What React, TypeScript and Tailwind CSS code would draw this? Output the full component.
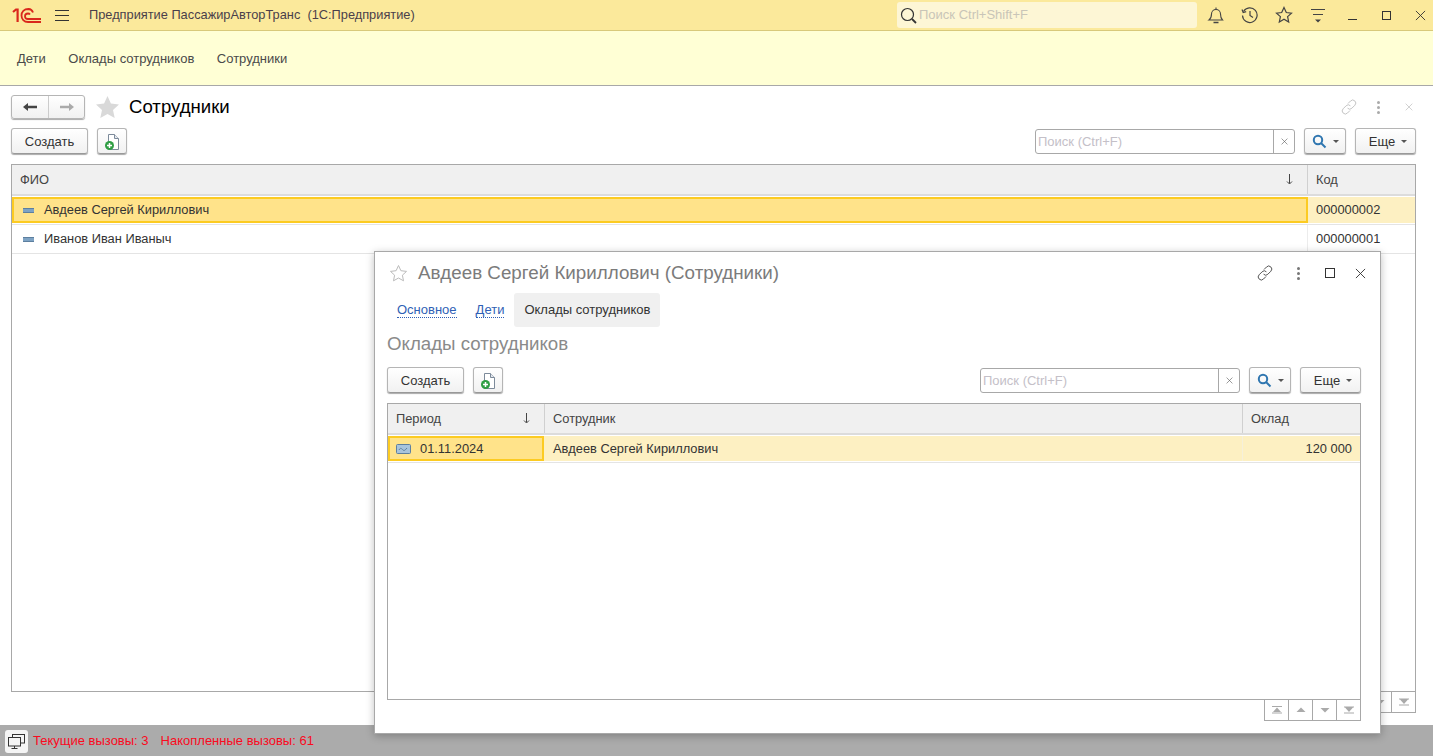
const font = { fontFamily: '"Liberation Sans", Arial, sans-serif' };

function AddIcon() {
  return (
    <svg width="16" height="18" viewBox="0 0 16 18">
      <path d="M4.5 1.5h6l4 4v11h-10z" fill="#fff" stroke="#7c8a9a" />
      <path d="M10.5 1.5v4h4" fill="#e4e8ee" stroke="#7c8a9a" />
      <circle cx="5.5" cy="12.5" r="4.5" fill="#2f9e44" />
      <path d="M3 12.5h5M5.5 10v5" stroke="#fff" strokeWidth="1.5" />
    </svg>
  );
}

function LinkIcon({ color, size = 16 }: { color: string; size?: number }) {
  return (
    <svg width={size} height={size} viewBox="0 0 16 16" fill="none" stroke={color} strokeWidth="1">
      <path d="M7 4.5l2.5-2.5a3 3 0 0 1 4.4 4.2l-3 3a3 3 0 0 1-4.3 0" />
      <path d="M9 11.5L6.5 14a3 3 0 0 1-4.4-4.2l3-3a3 3 0 0 1 4.3 0" />
    </svg>
  );
}

function Dots({ color }: { color: string }) {
  return (
    <div className="flex flex-col gap-[2px] w-[3px]">
      <div className="w-[3px] h-[3px] rounded-full" style={{ background: color }} />
      <div className="w-[3px] h-[3px] rounded-full" style={{ background: color }} />
      <div className="w-[3px] h-[3px] rounded-full" style={{ background: color }} />
    </div>
  );
}

function XIcon({ size, color }: { size: number; color: string }) {
  return (
    <svg width={size} height={size} viewBox="0 0 12 12" stroke={color} fill="none">
      <path d="M1 1l10 10M11 1L1 11" />
    </svg>
  );
}

function Caret() {
  return <div className="w-0 h-0 border-x-[3.5px] border-x-transparent border-t-[3.5px] border-t-[#555]" />;
}

function Btn({ className, children }: { className: string; children: React.ReactNode }) {
  return (
    <div className={`h-[26px] flex items-center justify-center rounded-[3px] border border-[#b5b5b5] border-b-[#999] bg-gradient-to-b from-white to-[#f1f1f1] shadow-[0_1px_1px_#aaa] text-[#333] text-[13px] pt-px ${className}`}>
      {children}
    </div>
  );
}

function SearchBar({ width }: { width: string }) {
  return (
    <div className="flex items-center">
      <div className={`h-[25px] flex rounded-[3px] border border-[#a8a8a8] bg-white ${width}`}>
        <div className="flex-1 pl-[2px] text-[13px] leading-[23px] text-[#c4c0c8]">Поиск (Ctrl+F)</div>
        <div className="w-[21px] border-l border-[#a8a8a8] flex items-center justify-center text-[#555]">
          <XIcon size={7} color="#555" />
        </div>
      </div>
      <Btn className="w-[42px] ml-[9px] gap-[6px]">
        <svg width="15" height="15" viewBox="0 0 15 15" fill="none" stroke="#2f76b0" strokeWidth="2">
          <circle cx="6" cy="6" r="4.2" />
          <path d="M9 9l4.5 4.5" />
        </svg>
        <Caret />
      </Btn>
      <Btn className="w-[61px] ml-[9px] gap-[6px] pl-[5px]">
        Еще
        <Caret />
      </Btn>
    </div>
  );
}

function Toolbar({ children }: { children: React.ReactNode }) {
  return (
    <div className="flex items-center justify-between">
      <div className="flex items-center gap-[9px]">
        <Btn className="w-[77px]">Создать</Btn>
        <Btn className="w-[30px]">
          <AddIcon />
        </Btn>
      </div>
      {children}
    </div>
  );
}

function PagerIcon({ kind }: { kind: 'first' | 'up' | 'down' | 'last' }) {
  return (
    <div className="flex-1 flex items-center justify-center border-l border-[#a8a8a8] first:border-l-0">
      <svg width="10" height="8" viewBox="0 0 10 8" fill="#aaa">
        {kind === 'first' && <path d="M0 0h10v1H0zM5 1.500l4 4.500H1z M0 6.500h10V7.500H0z" />}
        {kind === 'up' && <path d="M5 1.500l4.500 4.500H.5z" />}
        {kind === 'down' && <path d="M.5 2h9L5 6.500z" />}
        {kind === 'last' && <path d="M0 .5h10v1H0zM1 1.500h8L5 6z M0 6.500h10V7.500H0z" />}
      </svg>
    </div>
  );
}

function Pager() {
  return (
    <div className="flex justify-end">
      <div className="w-[97px] h-[21px] flex border-x border-b border-[#a8a8a8]">
        <PagerIcon kind="first" />
        <PagerIcon kind="up" />
        <PagerIcon kind="down" />
        <PagerIcon kind="last" />
      </div>
    </div>
  );
}

function SortArrow() {
  return (
    <svg width="7" height="11" viewBox="0 0 7 11" fill="none" stroke="#444">
      <path d="M3.5 0v9.5" />
      <path d="M1 7.5l2.5 2.5L6 7.5" />
    </svg>
  );
}

function RowIcon() {
  return <div className="w-[11px] h-[5px] bg-[#7ea3c4] border-y border-[#5d7f9f]" />;
}

function TopBar() {
  return (
    <div className="h-[31px] shrink-0 bg-[#fbe99b] border-b border-[#d8c97a] flex items-center">
      <svg className="ml-[12px]" width="30" height="16" viewBox="0 0 30 16" fill="none" stroke="#d9271c">
        <path d="M1 5l3-2.5h1.6V15" strokeWidth="2.2" />
        <path d="M21 5.5A5 5 0 0 0 16.5 2C12 2 9.5 5 9.500 8.500s2.500 6.500 6.500 6.500H29" strokeWidth="1.800" />
        <path d="M18 7.500a2.500 2.500 0 0 0-2-1c-2 0-3 1-3 2.700s1.200 2.800 3 2.800h13" strokeWidth="1.800" />
      </svg>
      <div className="ml-[13px] w-[14px] flex flex-col gap-[4px]">
        <div className="h-px bg-[#333]" />
        <div className="h-px bg-[#333]" />
        <div className="h-px bg-[#333]" />
      </div>
      <div className="ml-[20px] text-[12.8px] text-[#4a3f4a] whitespace-pre">Предприятие ПассажирАвторТранс  (1С:Предприятие)</div>
      <div className="absolute left-[897px] top-[2px] w-[300px] h-[26px] rounded-[3px] bg-[#fdf6d5] flex items-center pl-[3px] text-[13px] text-[#c9c5b8]">
        <svg width="17" height="17" viewBox="0 0 17 17" fill="none" stroke="#333" className="mr-[2px]">
          <circle cx="7.500" cy="7.500" r="6" strokeWidth="1.200" />
          <path d="M12 12l4 4" strokeWidth="1.800" />
        </svg>
        Поиск Ctrl+Shift+F
      </div>
      <div className="absolute left-[1199px] top-0 w-[238px] h-[30px] flex items-center">
        <div className="w-[34px] flex justify-center">
          <svg width="18" height="18" viewBox="0 0 18 18" fill="none" stroke="#444" strokeWidth="1.100">
            <path d="M2 14c2-1.500 2.500-3 2.500-6a4.500 4.500 0 0 1 9 0c0 3 .5 4.500 2 6z" />
            <path d="M6.500 16.500h5" strokeWidth="1.500" />
            <path d="M9 1.500v2" />
          </svg>
        </div>
        <div className="w-[34px] flex justify-center">
          <svg width="18" height="18" viewBox="0 0 18 18" fill="none" stroke="#444" strokeWidth="1.200">
            <path d="M2.500 5.500a7.300 7.300 0 1 1-1 4" />
            <path d="M1 3.500l1.200 3 3-.8" />
            <path d="M9 5v4.500l3 2" />
          </svg>
        </div>
        <div className="w-[34px] flex justify-center">
          <svg width="18" height="18" viewBox="0 0 18 18" fill="none" stroke="#444" strokeWidth="1.200">
            <path d="M9 1.500l2.300 5 5.200.6-3.900 3.500 1.100 5.400L9 13.300 4.300 16l1.100-5.400L1.500 7.100l5.200-.6z" />
          </svg>
        </div>
        <div className="w-[34px] flex justify-center">
          <svg width="14" height="15" viewBox="0 0 14 15" fill="#444">
            <path d="M0 1h14v1H0zM2 6h10v1H2zM4 11.500h6L7 14.500z" />
          </svg>
        </div>
        <div className="w-[34px] flex justify-center">
          <div className="w-[9px] h-px bg-[#333] mt-[8px]" />
        </div>
        <div className="w-[34px] flex justify-center">
          <div className="w-[9px] h-[9px] border border-[#333]" />
        </div>
        <div className="w-[34px] flex justify-center">
          <XIcon size={11} color="#333" />
        </div>
      </div>
    </div>
  );
}

function SectionPanel() {
  return (
    <div className="h-[55px] shrink-0 bg-[#ffffd5] border-b border-[#a8a8a8] flex items-center gap-[22.500px] pl-[17px] pt-px text-[13px] text-[#4a4a4a]">
      <span>Дети</span>
      <span>Оклады сотрудников</span>
      <span>Сотрудники</span>
    </div>
  );
}

function Employees() {
  return (
    <div className="flex-1 min-h-0 bg-white pl-[11px] pr-[17px] pt-[9px] flex flex-col">
      <div className="flex items-center h-[24px]">
        <div className="w-[74px] h-[24px] flex rounded-[3px] border border-[#b5b5b5] bg-gradient-to-b from-white to-[#f1f1f1] shadow-[0_1px_1px_#aaa]">
          <div className="w-[37px] flex items-center justify-center border-r border-[#ccc]">
            <svg width="14" height="10" viewBox="0 0 14 10" fill="#444"><path d="M0 5l5-4v2.800h9v2.400H5V9z" /></svg>
          </div>
          <div className="flex-1 flex items-center justify-center">
            <svg width="14" height="10" viewBox="0 0 14 10" fill="#aaa"><path d="M14 5L9 1v2.800H0v2.400h9V9z" /></svg>
          </div>
        </div>
        <svg className="ml-[10px]" width="25" height="24" viewBox="0 0 25 24" fill="#d9d9d9">
          <path d="M12.500 1l3.400 7.500 8.100.9-6 5.500 1.700 8.100-7.200-4.100-7.200 4.100 1.700-8.100-6-5.500 8.100-.9z" />
        </svg>
        <div className="ml-[9px] text-[18.600px] text-black leading-none">Сотрудники</div>
        <div className="ml-auto flex items-center pr-[1px]">
          <LinkIcon color="#c4c4c4" />
          <div className="ml-[20px]"><Dots color="#aaa" /></div>
          <div className="ml-[25px] mr-[2px]"><XIcon size={8} color="#bbb" /></div>
        </div>
      </div>
      <div className="mt-[9px]">
        <Toolbar>
          <SearchBar width="w-[260px]" />
        </Toolbar>
      </div>
      <div className="mt-[10px] h-[528px] border border-[#a8a8a8] flex flex-col">
        <div className="h-[31px] shrink-0 flex bg-[#f0f0f0] border-b-2 border-[#dcdcdc] text-[12.850px] text-[#444]">
          <div className="flex-1 flex items-center justify-between pl-[8px] pr-[14px] border-r border-[#d0d0d0]">
            ФИО
            <SortArrow />
          </div>
          <div className="w-[107px] flex items-center pl-[8px]">Код</div>
        </div>
        <div className="h-[28px] shrink-0 flex py-px text-[12.850px] text-[#333]">
          <div className="flex-1 flex items-center pl-[9px] bg-[#ffe38a] border-2 border-[#fccb22] gap-[10px]">
            <RowIcon />
            Авдеев Сергей Кириллович
          </div>
          <div className="w-[107px] flex items-center pl-[8px] bg-[#fdf0c2]">000000002</div>
        </div>
        <div className="h-[30px] shrink-0 flex border-y border-[#e4e4e4] text-[12.850px] text-[#333]">
          <div className="flex-1 flex items-center pl-[11px] gap-[10px] border-r border-[#ececec]">
            <RowIcon />
            Иванов Иван Иваныч
          </div>
          <div className="w-[107px] flex items-center pl-[8px]">000000001</div>
        </div>
      </div>
      <Pager />
    </div>
  );
}

function StatusBar() {
  return (
    <div className="h-[31px] shrink-0 bg-[#ababab] flex items-center pl-[5px] text-[13px] text-[#fa0a1e] pt-[1px]">
      <div className="w-[23px] h-[23px] rounded-[3px] bg-[#f4f4f4] flex items-center justify-center mr-[5px]">
        <svg width="17" height="15" viewBox="0 0 17 15" fill="#f4f4f4" stroke="#333">
          <rect x="4.500" y="0.500" width="12" height="8.500" />
          <rect x="0.500" y="3.500" width="12" height="8.500" />
          <path d="M6.500 12v2M3.500 14.500h6" />
        </svg>
      </div>
      <span>Текущие вызовы: 3</span>
      <span className="ml-[12px]">Накопленные вызовы: 61</span>
    </div>
  );
}

function SalaryWindow() {
  return (
    <div className="absolute left-[374px] top-[251px] w-[1007px] h-[483px] bg-white border border-[#a8a8a8] shadow-[0_2px_8px_rgba(0,0,0,0.25)] flex flex-col px-[12px]">
      <div className="h-[41px] shrink-0 flex items-center pt-[1px]">
        <svg width="19" height="18" viewBox="0 0 19 18" fill="none" stroke="#bbb" className="ml-[2px]">
          <path d="M9.500 1.500l2.400 5.200 5.600.7-4.100 3.800 1.100 5.600-5-2.800-5 2.800 1.100-5.600L1.500 7.400l5.600-.7z" />
        </svg>
        <div className="ml-[10px] text-[18.800px] text-[#7b7b7b]">Авдеев Сергей Кириллович (Сотрудники)</div>
        <div className="ml-auto flex items-center">
          <LinkIcon color="#555" />
          <div className="ml-[24px]"><Dots color="#777" /></div>
          <div className="ml-[25px] w-[10px] h-[10px] border border-[#333]" />
          <div className="ml-[20px] mr-[2px]"><XIcon size={11} color="#333" /></div>
        </div>
      </div>
      <div className="h-[34px] shrink-0 flex items-center text-[13px]">
        <span className="ml-[10px] text-[#2f5fb5] border-b border-dotted border-[#2f5fb5] leading-[14px]">Основное</span>
        <span className="ml-[19px] text-[#2f5fb5] border-b border-dotted border-[#2f5fb5] leading-[14px]">Дети</span>
        <div className="ml-[10px] h-[34px] px-[10px] rounded-[3px] bg-[#f0f0f0] flex items-center text-[#333]">Оклады сотрудников</div>
      </div>
      <div className="mt-[6px] text-[18.700px] leading-[22px] text-[#8a8a8a]">Оклады сотрудников</div>
      <div className="mt-[12px] pr-[7px]">
        <Toolbar>
          <SearchBar width="w-[260px]" />
        </Toolbar>
      </div>
      <div className="mt-[10px] mr-[7px] h-[297px] border border-[#a8a8a8] flex flex-col">
        <div className="h-[31px] shrink-0 flex bg-[#f0f0f0] border-b-2 border-[#dcdcdc] text-[12.850px] text-[#444]">
          <div className="w-[157px] flex items-center justify-between pl-[8px] pr-[14px] border-r border-[#d0d0d0]">
            Период
            <SortArrow />
          </div>
          <div className="flex-1 flex items-center pl-[8px] border-r border-[#d0d0d0]">Сотрудник</div>
          <div className="w-[117px] flex items-center pl-[8px]">Оклад</div>
        </div>
        <div className="h-[28px] shrink-0 flex py-px border-b border-[#e4e4e4] text-[12.850px] text-[#333]">
          <div className="w-[156px] flex items-center pl-[6px] bg-[#ffe38a] border-2 border-[#fccb22] gap-[9px]">
            <svg width="15" height="10" viewBox="0 0 15 10" fill="#a8c4dc" stroke="#5d7f9f">
              <rect x="0.500" y="0.500" width="14" height="9" rx="1" />
              <path d="M3 6c1.500-3 3-1 4 0s2 .5 4-2" fill="none" />
            </svg>
            01.11.2024
          </div>
          <div className="flex-1 flex items-center pl-[9px] bg-[#fdf0c2] border-r border-[#f6f0da]">Авдеев Сергей Кириллович</div>
          <div className="w-[117px] flex items-center justify-end pr-[8px] bg-[#fdf0c2]">120 000</div>
        </div>
      </div>
      <div className="mr-[7px]">
        <Pager />
      </div>
    </div>
  );
}

export default function App() {
  return (
    <div className="relative h-[756px] w-[1433px] overflow-hidden flex flex-col bg-white" style={font}>
      <TopBar />
      <SectionPanel />
      <Employees />
      <StatusBar />
      <SalaryWindow />
    </div>
  );
}
